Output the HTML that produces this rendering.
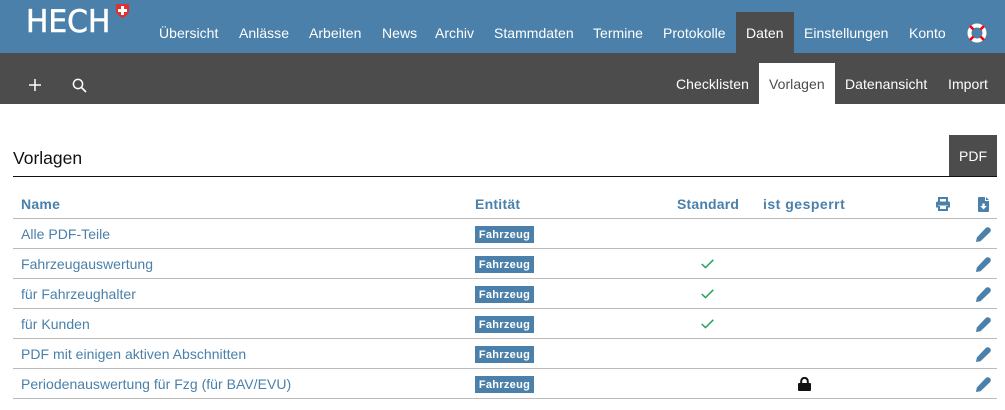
<!DOCTYPE html>
<html lang="de"><head><meta charset="utf-8"><title>Vorlagen</title>
<style>
html,body{margin:0;padding:0;width:1005px;height:410px;overflow:hidden;background:#fff}
body{font-family:"Liberation Sans",sans-serif;position:relative}
.t{position:absolute;white-space:nowrap;line-height:20px}
.b{position:absolute}
.n{color:#fff;font-size:14px;top:23px;letter-spacing:.03px}
.s{color:#fff;font-size:14px;top:74px;letter-spacing:.05px}
.h{color:#4a80aa;font-size:14px;font-weight:bold;top:194px;letter-spacing:.25px}
.c{color:#4a80aa;font-size:14px;letter-spacing:.03px}
.l{position:absolute;left:13px;width:984px;height:1px;background:#bbb}
.g{position:absolute;left:475px;width:59px;height:17px;background:#4a80aa;color:#fff;font-size:11px;font-weight:bold;line-height:18px;text-align:center;letter-spacing:.3px}
svg{position:absolute;display:block}
</style></head><body>
<div class="b" style="left:0;top:0;width:1005px;height:53px;background:#4a80aa"></div>
<div class="b" style="left:0;top:53px;width:1005px;height:51px;background:#4c4c4c"></div>
<div class="b" style="left:736px;top:12px;width:58px;height:41px;background:#4c4c4c"></div>
<div class="b" style="left:759px;top:63px;width:76px;height:41px;background:#fff"></div>

<div class="t" style="left:26px;top:4px;color:#fff;font-size:31px;line-height:36px;font-family:'DejaVu Sans',sans-serif;-webkit-text-stroke:.6px #fff;transform-origin:0 50%;transform:scaleX(.96)">HECH</div>
<svg style="left:115px;top:3px" width="15" height="15" viewBox="0 0 15 15"><path d="M1 1H14V8C14 11 11 13 7.500 15C4 13 1 11 1 8Z" fill="#e03030"/><path d="M6 3H9V6H12V9H9V12H6V9H3V6H6Z" fill="#fff"/></svg>

<div class="t n" style="left:159px">Übersicht</div>
<div class="t n" style="left:239px">Anlässe</div>
<div class="t n" style="left:309px">Arbeiten</div>
<div class="t n" style="left:382px">News</div>
<div class="t n" style="left:435px">Archiv</div>
<div class="t n" style="left:494px">Stammdaten</div>
<div class="t n" style="left:593px">Termine</div>
<div class="t n" style="left:663px">Protokolle</div>
<div class="t n" style="left:746px">Daten</div>
<div class="t n" style="left:804px">Einstellungen</div>
<div class="t n" style="left:909px">Konto</div>
<svg style="left:967px;top:23px" width="20" height="20" viewBox="0 0 20 20"><circle cx="10" cy="10" r="7.500" fill="none" stroke="#fff" stroke-width="4"/><path d="M3 3L6.500 6.500M17 3L13.500 6.500M3 17L6.500 13.500M17 17L13.500 13.500" stroke="#f00" stroke-width="2.600"/></svg>

<svg style="left:29px;top:79px" width="12" height="12" viewBox="0 0 12 12"><path d="M6 0V12M0 6H12" stroke="#fff" stroke-width="1.500"/></svg>
<svg style="left:72px;top:78px" width="15" height="15" viewBox="0 0 15 15"><circle cx="6" cy="6" r="4.600" fill="none" stroke="#fff" stroke-width="1.500"/><path d="M9.500 9.500L14 14" stroke="#fff" stroke-width="1.600"/></svg>

<div class="t s" style="left:676px">Checklisten</div>
<div class="t s" style="left:769px;color:#4c4c4c">Vorlagen</div>
<div class="t s" style="left:845px">Datenansicht</div>
<div class="t s" style="left:948px">Import</div>

<div class="t" style="left:13px;top:148px;font-size:17.500px;color:#111">Vorlagen</div>
<div class="b" style="left:949px;top:135px;width:48px;height:42px;background:#4c4c4c"></div>
<div class="t" style="left:959px;top:146px;font-size:14px;color:#fff">PDF</div>
<div class="b" style="left:13px;top:176px;width:984px;height:1px;background:#111"></div>

<div class="t h" style="left:21px">Name</div>
<div class="t h" style="left:475px">Entität</div>
<div class="t h" style="left:677px;letter-spacing:.18px">Standard</div>
<div class="t h" style="left:763px;letter-spacing:.5px">ist gesperrt</div>
<svg style="left:936px;top:197px" width="14" height="14" viewBox="0 0 14 14"><path d="M3 5V1H11V5" fill="none" stroke="#4a80aa" stroke-width="2"/><path d="M1.500 4.500H12.500Q14 4.500 14 6V10.500H12V8.500H2V10.500H0V6Q0 4.500 1.500 4.500Z" fill="#4a80aa"/><path d="M3 9V13H11V9" fill="none" stroke="#4a80aa" stroke-width="2"/></svg>
<svg style="left:978px;top:197px" width="11" height="15" viewBox="0 0 11 15"><path d="M1 0H7V4H11V14Q11 15 10 15H1Q0 15 0 14V1Q0 0 1 0Z" fill="#4a80aa"/><path d="M8 0L11 3H8Z" fill="#4a80aa"/><path d="M4.300 6.500H6.700V9H8.800L5.500 12.500L2.200 9H4.300Z" fill="#fff"/></svg>

<div class="l" style="top:218px"></div>
<div class="l" style="top:248px"></div>
<div class="l" style="top:278px"></div>
<div class="l" style="top:308px"></div>
<div class="l" style="top:338px"></div>
<div class="l" style="top:368px"></div>
<div class="l" style="top:398px"></div>

<div class="t c" style="left:21px;top:224px">Alle PDF-Teile</div>
<div class="t c" style="left:21px;top:254px">Fahrzeugauswertung</div>
<div class="t c" style="left:21px;top:284px">für Fahrzeughalter</div>
<div class="t c" style="left:21px;top:314px">für Kunden</div>
<div class="t c" style="left:21px;top:344px">PDF mit einigen aktiven Abschnitten</div>
<div class="t c" style="left:21px;top:374px">Periodenauswertung für Fzg (für BAV/EVU)</div>

<div class="g" style="top:226px">Fahrzeug</div>
<div class="g" style="top:256px">Fahrzeug</div>
<div class="g" style="top:286px">Fahrzeug</div>
<div class="g" style="top:316px">Fahrzeug</div>
<div class="g" style="top:346px">Fahrzeug</div>
<div class="g" style="top:376px">Fahrzeug</div>

<svg style="left:701px;top:259px" width="13" height="10" viewBox="0 0 13 10"><path d="M.7 5L4.500 8.600L12.300 .8" fill="none" stroke="#22a45a" stroke-width="1.500"/></svg>
<svg style="left:701px;top:289px" width="13" height="10" viewBox="0 0 13 10"><path d="M.7 5L4.500 8.600L12.300 .8" fill="none" stroke="#22a45a" stroke-width="1.500"/></svg>
<svg style="left:701px;top:319px" width="13" height="10" viewBox="0 0 13 10"><path d="M.7 5L4.500 8.600L12.300 .8" fill="none" stroke="#22a45a" stroke-width="1.500"/></svg>

<svg style="left:798px;top:377px" width="13" height="14" viewBox="0 0 13 14"><path d="M3.200 6V4.200A3.300 3.300 0 0 1 9.800 4.200V6" fill="none" stroke="#111" stroke-width="2"/><path d="M1 6H12Q13 6 13 7V13Q13 14 12 14H1Q0 14 0 13V7Q0 6 1 6Z" fill="#111"/></svg>

<svg style="left:976px;top:227px" width="15" height="15" viewBox="0 0 15 15"><path d="M10 .8Q11.800 -.3 13.300 .6L14.400 1.700Q15.300 3.200 14.200 5L4.500 14.200L0 15L.8 10.500Z" fill="#4a80aa"/></svg>
<svg style="left:976px;top:257px" width="15" height="15" viewBox="0 0 15 15"><path d="M10 .8Q11.800 -.3 13.300 .6L14.400 1.700Q15.300 3.200 14.200 5L4.500 14.200L0 15L.8 10.500Z" fill="#4a80aa"/></svg>
<svg style="left:976px;top:287px" width="15" height="15" viewBox="0 0 15 15"><path d="M10 .8Q11.800 -.3 13.300 .6L14.400 1.700Q15.300 3.200 14.200 5L4.500 14.200L0 15L.8 10.500Z" fill="#4a80aa"/></svg>
<svg style="left:976px;top:317px" width="15" height="15" viewBox="0 0 15 15"><path d="M10 .8Q11.800 -.3 13.300 .6L14.400 1.700Q15.300 3.200 14.200 5L4.500 14.200L0 15L.8 10.500Z" fill="#4a80aa"/></svg>
<svg style="left:976px;top:347px" width="15" height="15" viewBox="0 0 15 15"><path d="M10 .8Q11.800 -.3 13.300 .6L14.400 1.700Q15.300 3.200 14.200 5L4.500 14.200L0 15L.8 10.500Z" fill="#4a80aa"/></svg>
<svg style="left:976px;top:377px" width="15" height="15" viewBox="0 0 15 15"><path d="M10 .8Q11.800 -.3 13.300 .6L14.400 1.700Q15.300 3.200 14.200 5L4.500 14.200L0 15L.8 10.500Z" fill="#4a80aa"/></svg>
</body></html>
